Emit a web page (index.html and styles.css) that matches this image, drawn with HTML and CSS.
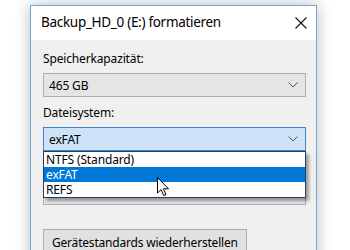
FILE: index.html
```html
<!DOCTYPE html>
<html lang="de">
<head>
    <meta charset="UTF-8">
    <meta name="viewport" content="width=device-width, initial-scale=1.0">
    <title>Formatieren</title>
    <link rel="stylesheet" href="styles.css">
</head>
<body>
    <div class="window">
        <div class="titlebar">
            <span class="title">Backup_HD_0 (E:) formatieren</span>
            <svg class="close" width="12" height="12" viewBox="0 0 12 12">
                <path d="M0.5 0.5 L11.5 11.5 M11.5 0.5 L0.5 11.5" stroke="#111" stroke-width="1.1" fill="none"/>
            </svg>
        </div>

        <div class="content">
            <div class="label">Speicherkapazität:</div>
            <div class="combo">
                <span>465 GB</span>
                <svg class="chevron" width="10" height="6" viewBox="0 0 10 6"><path d="M0.5 0.5 L5 5 L9.5 0.5" stroke="#555" fill="none"/></svg>
            </div>

            <div class="label">Dateisystem:</div>
            <div class="combo-wrap">
                <div class="combo open">
                    <span>exFAT</span>
                    <svg class="chevron" width="10" height="6" viewBox="0 0 10 6"><path d="M0.5 0.5 L5 5 L9.5 0.5" stroke="#555" fill="none"/></svg>
                </div>
                <!-- popup list lies over the fields below -->
                <ul class="listbox">
                    <li>NTFS (Standard)</li>
                    <li class="selected">exFAT</li>
                    <li>REFS</li>
                </ul>
                <svg class="cursor" width="13" height="20" viewBox="0 0 13 20">
                    <path d="M0.5 0.5 L0.5 16 L4.2 12.6 L6.7 18.6 L9 17.6 L6.5 11.8 L11.5 11.8 Z" fill="#fff" stroke="#000" stroke-width="1" stroke-linejoin="miter"/>
                </svg>
            </div>

            <!-- allocation size row, covered by the open list -->
            <div class="label covered">&nbsp;</div>
            <div class="combo">
                <svg class="chevron" width="10" height="6" viewBox="0 0 10 6"><path d="M0.5 0.5 L5 5 L9.5 0.5" stroke="#555" fill="none"/></svg>
            </div>

            <button class="defaults">Gerätestandards wiederherstellen</button>
        </div>
    </div>
</body>
</html>
```

FILE: styles.css
```css
body {
    margin: 0;
    background: #fff;
    font-family: "Noto Sans", sans-serif;
    font-size: 12px;
    letter-spacing: -0.15px;
    color: #000;
    overflow: hidden;
}
.window {
    margin: 5px 0 0 30px;
    width: 285px;
    border: 1px solid #6ea6dd;
    box-shadow: 0 0 14px rgba(0, 0, 0, 0.28);
}
.titlebar {
    height: 34px;
    background: #fff;
    display: flex;
    align-items: center;
    justify-content: space-between;
    padding: 0 9px 0 10px;
}
.title {
    font-size: 13.5px;
    letter-spacing: -0.3px;
    margin-top: -2px;
}
.close {
    margin-top: -1px;
}
.content {
    background: #f0f0f0;
    padding: 11px 10px 30px 12px;
}
.label {
    line-height: 16px;
    margin-bottom: 6px;
}
.combo {
    height: 22px;
    border: 1px solid #adadad;
    background: #e5e5e5;
    display: flex;
    align-items: center;
    justify-content: space-between;
    padding: 0 7px 0 5px;
    margin-bottom: 8px;
}
.combo .chevron {
    margin-left: auto;
}
.combo.open {
    background: #cde3f7;
    border-color: #3a82cc;
}
.combo-wrap {
    position: relative;
}
.listbox {
    position: absolute;
    top: 24px;
    left: 0;
    right: 0;
    margin: 0;
    padding: 0;
    list-style: none;
    background: #fff;
    border: 1px solid #1f3f66;
    box-shadow: 3px 3px 3px rgba(0, 0, 0, 0.35);
    z-index: 2;
}
.listbox li {
    height: 15px;
    line-height: 15px;
    padding-left: 2px;
}
.listbox li.selected {
    background: #0078d7;
    color: #fff;
}
.cursor {
    position: absolute;
    left: 114px;
    top: 50px;
    z-index: 3;
}
.defaults {
    margin-top: 16px;
    font-family: inherit;
    font-size: 12px;
    letter-spacing: -0.2px;
    height: 26px;
    padding: 0 8px;
    background: #e1e1e1;
    border: 1px solid #adadad;
    color: #000;
}
```
